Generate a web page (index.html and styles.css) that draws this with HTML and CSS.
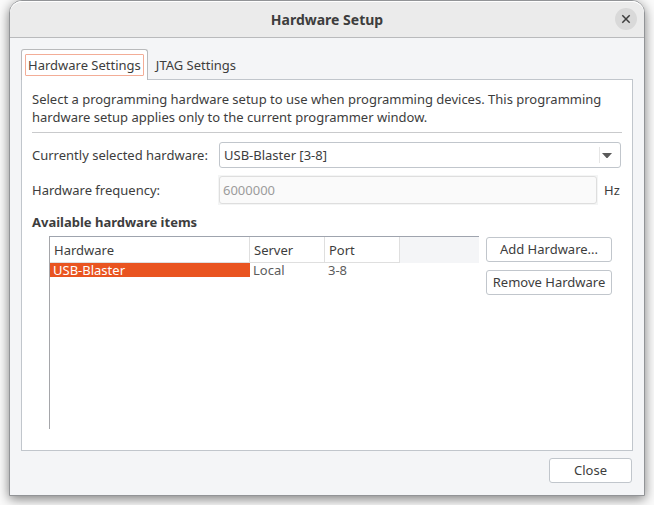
FILE: index.html
```html
<!DOCTYPE html>
<html lang="en">
<head>
<meta charset="utf-8">
<title>Hardware Setup</title>
<link rel="stylesheet" href="styles.css">
</head>
<body>
<main class="window">
  <header class="titlebar">
    <h1>Hardware Setup</h1>
    <button class="window-close" type="button" aria-label="Close window">
      <svg width="10" height="10" viewBox="0 0 10 10" aria-hidden="true"><path d="M1.3 1.3l7.4 7.4M8.7 1.3l-7.4 7.4" fill="none" stroke="#3d3d3d" stroke-width="1.5"/></svg>
    </button>
  </header>
  <div class="content">
    <div class="tabs" role="tablist">
      <button class="tab active" type="button" role="tab" aria-selected="true"><span class="focus">Hardware Settings</span></button>
      <button class="tab" type="button" role="tab" aria-selected="false">JTAG Settings</button>
    </div>
    <section class="panel" role="tabpanel">
      <p class="intro">Select a programming hardware setup to use when programming devices. This programming hardware setup applies only to the current programmer window.</p>
      <hr>
      <div class="row">
        <label for="hardware">Currently selected hardware:</label>
        <div class="combo">
          <select id="hardware"><option>USB-Blaster [3-8]</option></select>
          <span class="combo-arrow"><svg width="10" height="5" viewBox="0 0 10 5" aria-hidden="true"><path d="M0 0h10L5.5 5h-1z" fill="#5a5a5a"/></svg></span>
        </div>
      </div>
      <div class="row frequency">
        <label for="frequency">Hardware frequency:</label>
        <div class="field"><input id="frequency" type="text" value="6000000" disabled></div>
        <span class="unit">Hz</span>
      </div>
      <h2>Available hardware items</h2>
      <div class="items">
        <div class="tree">
          <table>
            <colgroup><col class="col-hardware"><col class="col-value"><col class="col-value"><col></colgroup>
            <thead><tr><th>Hardware</th><th>Server</th><th>Port</th><td class="spare"></td></tr></thead>
            <tbody><tr><td class="selected">USB-Blaster</td><td>Local</td><td>3-8</td><td></td></tr></tbody>
          </table>
        </div>
        <div class="actions">
          <button class="button" type="button">Add Hardware...</button>
          <button class="button" type="button">Remove Hardware</button>
        </div>
      </div>
    </section>
    <footer class="footer"><button class="button close" type="button">Close</button></footer>
  </div>
</main>
</body>
</html>
```
FILE: styles.css
```css
* { box-sizing: border-box; }
html { height: 100%; }
body {
  margin: 0;
  min-height: 100%;
  display: flex;
  padding: 0 9px 9px;
  background: #fbfbfb;
  color: #3d3d3d;
  font: 13px/18px "Noto Sans", sans-serif;
}
button, input, select { font: inherit; color: inherit; margin: 0; }
.window {
  flex: 1;
  display: flex;
  flex-direction: column;
  border: 1px solid #929497;
  border-radius: 13px 13px 0 0;
  background: #f4f5f7;
  box-shadow: 0 3px 12px rgba(0, 0, 0, 0.5);
}
.titlebar {
  position: relative;
  height: 37px;
  padding-top: 2px;
  display: flex;
  align-items: center;
  justify-content: center;
  background: #ebebeb;
  border-bottom: 1px solid #b9babc;
  border-radius: 12px 12px 0 0;
  box-shadow: inset 0 1px #fff;
}
h1 { margin: 0; font-size: 14px; line-height: 20px; }
.window-close {
  position: absolute;
  right: 7px;
  top: 7px;
  width: 22px;
  height: 22px;
  padding: 0;
  display: grid;
  place-items: center;
  border: 0;
  border-radius: 50%;
  background: #d9d9d9;
}
.content {
  flex: 1;
  display: flex;
  flex-direction: column;
  padding: 11px 11px 12px;
}
.tabs { display: flex; align-items: flex-end; }
.tab {
  height: 30px;
  padding: 2px 8px 0;
  border: 0;
  background: none;
}
.tab.active {
  position: relative;
  height: 31px;
  margin-bottom: -1px;
  padding: 0 3px 1px;
  border: 1px solid #b9babc;
  border-bottom: 0;
  border-radius: 3px 3px 0 0;
  background: #fff;
}
.focus {
  display: block;
  padding: 1px 2px;
  border: 1px solid #f3ad97;
  border-radius: 1px;
}
.panel {
  flex: 1;
  display: flex;
  flex-direction: column;
  padding: 10px 10px 21px;
  border: 1px solid #c1c6cc;
  background: #fff;
}
.intro { margin: 0; }
hr { width: 100%; margin: 6px 0 9px; border: 0; border-top: 1px solid #c9cacc; }
.row { display: flex; align-items: center; padding-right: 1px; }
.row label { width: 187px; }
.combo { position: relative; flex: 1; }
.combo select {
  display: block;
  appearance: none;
  width: 100%;
  height: 26px;
  padding: 0 28px 0 4px;
  border: 1px solid #c1c6cc;
  border-radius: 3px;
  background: #fff;
}
.combo-arrow {
  position: absolute;
  right: 0;
  top: 5px;
  width: 22px;
  height: 16px;
  padding-left: 2px;
  display: flex;
  align-items: center;
  border-left: 1px solid #e6e6e6;
  pointer-events: none;
}
.frequency { margin-top: 7px; }
.frequency label { width: 186px; }
.field { flex: 1; padding: 1px; background: #f4f5f5; }
.field input {
  display: block;
  width: 100%;
  height: 28px;
  padding: 0 3px;
  border: 1px solid #dedede;
  border-radius: 3px;
  background: #fafafa;
  color: #9c9c9c;
}
.unit { width: 23px; padding-left: 6px; }
h2 { margin: 8px 0 5px; font-size: 13px; line-height: 18px; }
.items { flex: 1; display: flex; gap: 7px; padding: 0 10px 0 17px; }
.tree { flex: 1; border-top: 1px solid #9fa4ae; border-left: 1px solid #a5a6aa; }
table { width: 100%; table-layout: fixed; border-collapse: separate; border-spacing: 0; }
.col-hardware { width: 200px; }
.col-value { width: 75px; }
th {
  height: 26px;
  padding: 0 4px;
  border-right: 1px solid #dfdfdf;
  border-bottom: 1px solid #dfdfdf;
  font-weight: 400;
  text-align: left;
}
td { height: 14px; padding: 0 3px; line-height: 14px; color: #5c5c5c; }
.spare { background: #f4f5f7; }
.selected { background: #e95420; color: #fff; }
.actions { width: 126px; display: flex; flex-direction: column; gap: 8px; padding-top: 1px; }
.button {
  height: 25px;
  padding: 0 0 2px;
  border: 1px solid #c1c6cc;
  border-radius: 3px;
  background: #fff;
}
.footer { display: flex; justify-content: flex-end; padding: 7px 1px 0 0; }
.close { width: 83px; }
```
